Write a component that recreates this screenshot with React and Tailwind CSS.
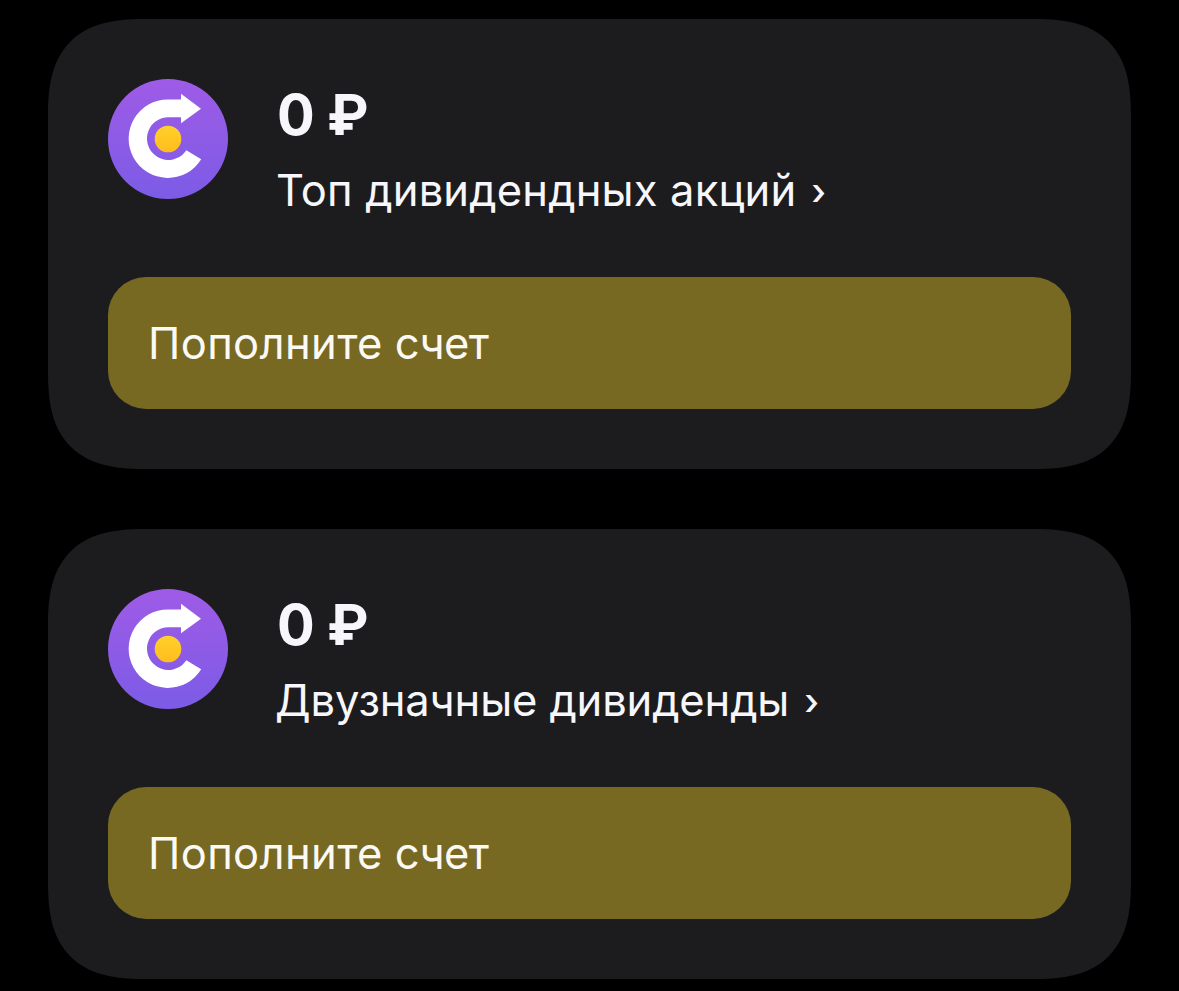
const portfolios = [
  { id: 1, amount: '0', title: 'Топ дивидендных акций', spacing: 'tracking-[0.17px]' },
  { id: 2, amount: '0', title: 'Двузначные дивиденды', spacing: '-ml-px tracking-[-0.14px]' },
];

const CoinIcon = ({ id }) => {
  const bg = `coin-bg-${id}`;
  const dot = `coin-dot-${id}`;

  return (
    <svg className="size-[120px] shrink-0" viewBox="0 0 120 120">
      <defs>
        <linearGradient id={bg} x1="0" y1="0" x2="0" y2="1">
          <stop offset="0" stopColor="#9f5be6" />
          <stop offset="1" stopColor="#7c5be6" />
        </linearGradient>
        <linearGradient id={dot} x1="0" y1="0" x2="0" y2="1">
          <stop offset="0" stopColor="#ffd02c" />
          <stop offset="1" stopColor="#ffbd1c" />
        </linearGradient>
      </defs>
      <circle cx="60" cy="60" r="60" fill={`url(#${bg})`} />
      <path
        d="M73 14.7 93 29.7 73 44.3V38.2H60A21.4 21.4 0 1 0 78.3 71.3L93.2 80.3A39.2 39.2 0 1 1 60 20.5H73Z"
        fill="#fff"
      />
      <circle cx="60" cy="60" r="13.3" fill={`url(#${dot})`} />
    </svg>
  );
};

const PortfolioCard = ({ id, amount, title, spacing }) => {
  return (
    <div className="h-[450px] rounded-[100px] bg-[#1c1c1e] p-[60px] [corner-shape:superellipse(1.44)]">
      <div className="flex h-[198px] gap-12">
        <CoinIcon id={id} />
        <div className="text-[#f7f7fb]">
          <p className="mt-[6px] ml-px text-[56px] leading-[60px] font-bold tracking-[-0.5px]">{amount} ₽</p>
          <p className={`mt-[17px] text-[43.5px] leading-[56px] whitespace-nowrap ${spacing}`}>
            {title}
            <span className="ml-[15px] align-[1px] text-[37px] leading-none font-medium">›</span>
          </p>
        </div>
      </div>
      <button className="flex h-[132px] w-full items-center gap-3 rounded-[38px] bg-[#776822] px-10 pt-0.5 text-left text-[43.5px] text-[#fbf9f5]">
        <span className="tracking-[0.38px]">Пополните</span>
        <span className="tracking-[-0.6px]">счет</span>
      </button>
    </div>
  );
};

export default function App() {
  return (
    <div className="flex h-[991px] flex-col gap-[60px] overflow-hidden bg-black px-12 pt-[19px] font-['Inter',sans-serif]">
      {portfolios.map((item) => (
        <PortfolioCard key={item.id} {...item} />
      ))}
    </div>
  );
}
